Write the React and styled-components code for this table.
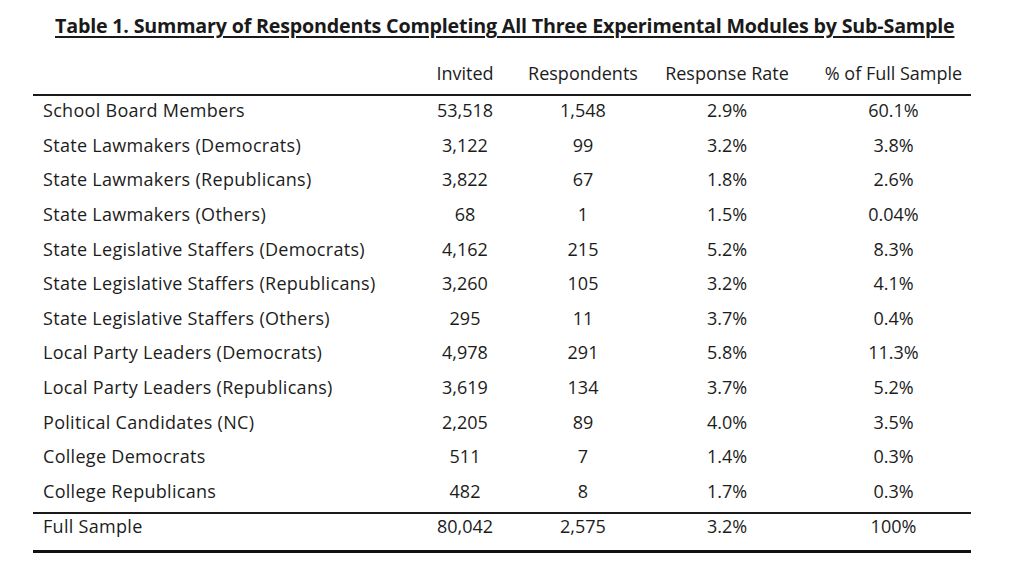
import React from 'react';
import styled, { createGlobalStyle } from 'styled-components';

const GlobalStyle = createGlobalStyle`
  *, *::before, *::after { box-sizing: border-box; }
  body {
    margin: 0;
    background: #fff;
    font-family: "Open Sans", "Noto Sans", sans-serif;
    color: #1c1c1c;
  }
`;

const rows = [
  ['School Board Members', '53,518', '1,548', '2.9%', '60.1%'],
  ['State Lawmakers (Democrats)', '3,122', '99', '3.2%', '3.8%'],
  ['State Lawmakers (Republicans)', '3,822', '67', '1.8%', '2.6%'],
  ['State Lawmakers (Others)', '68', '1', '1.5%', '0.04%'],
  ['State Legislative Staffers (Democrats)', '4,162', '215', '5.2%', '8.3%'],
  ['State Legislative Staffers (Republicans)', '3,260', '105', '3.2%', '4.1%'],
  ['State Legislative Staffers (Others)', '295', '11', '3.7%', '0.4%'],
  ['Local Party Leaders (Democrats)', '4,978', '291', '5.8%', '11.3%'],
  ['Local Party Leaders (Republicans)', '3,619', '134', '3.7%', '5.2%'],
  ['Political Candidates (NC)', '2,205', '89', '4.0%', '3.5%'],
  ['College Democrats', '511', '7', '1.4%', '0.3%'],
  ['College Republicans', '482', '8', '1.7%', '0.3%'],
];

const total = ['Full Sample', '80,042', '2,575', '3.2%', '100%'];

const Page = styled.div`
  width: 1024px;
  height: 586px;
  display: flex;
  flex-direction: column;
  align-items: flex-start;
  padding: 12px 0 0 33px;
`;

const Title = styled.h1`
  margin: 0 0 0 22px;
  font-size: 19.7px;
  line-height: 27px;
  font-weight: 700;
  color: #1a1a1a;
  text-decoration: underline;
  text-decoration-thickness: 1.5px;
  text-underline-offset: 3px;
  letter-spacing: -0.2px;
`;

const Table = styled.div`
  margin-top: 17px;
  width: 938px;
  display: flex;
  flex-direction: column;
`;

const Row = styled.div`
  display: grid;
  grid-template-columns: 387px 90px 146px 142px 173px;
  align-items: center;
  height: ${({ $h }) => $h || '34.6px'};
  padding-bottom: ${({ $pb }) => $pb || '0'};
  border-bottom: ${({ $rule }) => $rule || 'none'};
  font-size: 18px;
  line-height: 24px;
`;

const Cell = styled.div`
  text-align: ${({ $left }) => ($left ? 'left' : 'center')};
  padding-left: ${({ $left, $pad }) => ($left ? '10px' : $pad || '0')};
  letter-spacing: ${({ $left }) => ($left ? '0.3px' : '0')};
  white-space: nowrap;
`;

const Body = styled.div`
  display: flex;
  flex-direction: column;
  margin-top: -3px;
  padding-bottom: 4px;
  border-bottom: 2px solid #1a1a1a;
`;

const renderCells = (cells) =>
  cells.map((c, i) => (
    <Cell key={i} $left={i === 0} $pad={i === 4 ? '18px' : undefined}>
      {c}
    </Cell>
  ));

export default function App() {
  return (
    <>
      <GlobalStyle />
      <Page>
        <Title>Table 1. Summary of Respondents Completing All Three Experimental Modules by Sub-Sample</Title>
        <Table>
          <Row $h="40px" $pb="4px" $rule="2px solid #1a1a1a">
            {renderCells(['', 'Invited', 'Respondents', 'Response Rate', '% of Full Sample'])}
          </Row>
          <Body>
            {rows.map((r) => (
              <Row key={r[0]}>{renderCells(r)}</Row>
            ))}
          </Body>
          <Row $h="39px" $pb="12px" $rule="3px solid #111">
            {renderCells(total)}
          </Row>
        </Table>
      </Page>
    </>
  );
}
